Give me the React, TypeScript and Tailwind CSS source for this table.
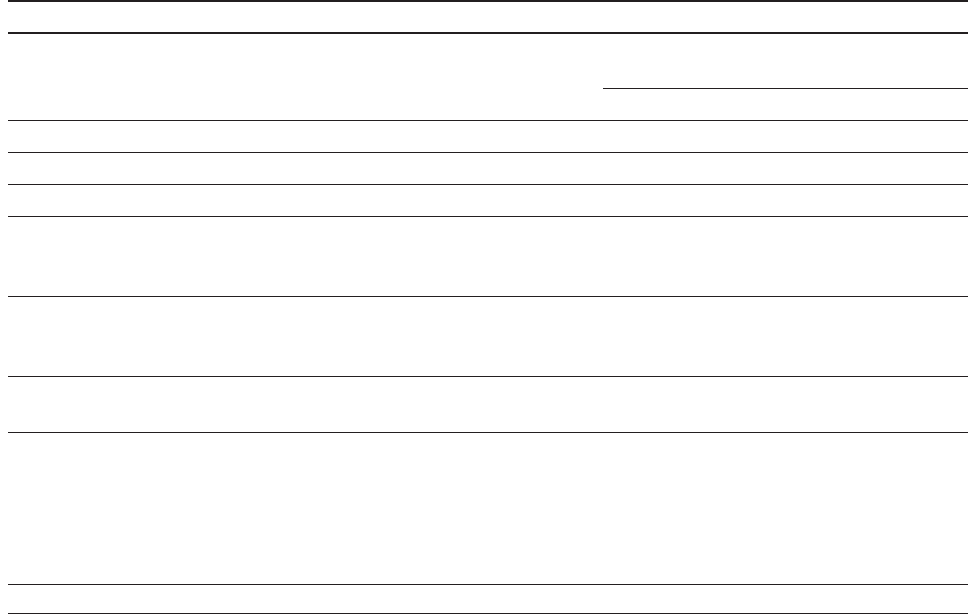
const rule = "h-px bg-[#231f20]";

// body rows: height of the blank cell area between rules
const rowHeights = ["h-[31px]", "h-[31px]", "h-[31px]", "h-[79px]", "h-[79px]", "h-[55px]", "h-[151px]", "h-[28px]"];

export default function App() {
  return (
    <div className="min-h-[615px] w-full bg-white pl-2 font-['Liberation_Sans',sans-serif]">
      <div className="flex flex-col">
        {/* table top border */}
        <div className="h-[2px] bg-[#231f20]" />
        <div className="h-[30px]" />
        <div className="h-[2px] bg-[#231f20]" />

        {/* header with grouped columns */}
        <div className="flex h-[86px]">
          <div className="w-[595px] shrink-0" />
          <div className="flex flex-1 flex-col">
            <div className="h-[54px]" />
            <div className={rule} />
          </div>
        </div>

        {rowHeights.map((h, i) => (
          <div key={i} className="flex flex-col">
            <div className={rule} />
            <div className={h} />
          </div>
        ))}
        <div className={rule} />
      </div>
    </div>
  );
}
